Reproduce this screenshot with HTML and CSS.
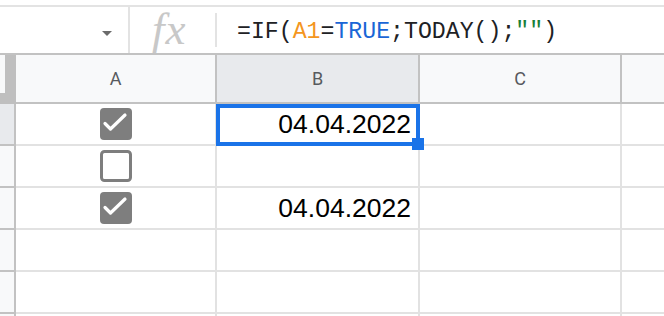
FILE: index.html
```html
<!DOCTYPE html>
<html lang="de">
<head>
  <meta charset="UTF-8">
  <meta name="viewport" content="width=device-width, initial-scale=1.0">
  <title>Tabelle - Datum bei Haken</title>
  <link rel="stylesheet" href="styles.css">
</head>
<body>
  <div class="top-strip"></div>

  <div class="formula-bar">
    <div class="name-box"><span class="caret"></span></div>
    <div class="fx">fx</div>
    <div class="fx-sep"></div>
    <div class="formula">=IF(<span class="ref">A1</span>=<span class="bool">TRUE</span>;TODAY();<span class="str">""</span>)</div>
  </div>

  <div class="grid">
    <!-- Spaltenköpfe -->
    <div class="corner"></div>
    <div class="col-head">A</div>
    <div class="col-head active">B</div>
    <div class="col-head">C</div>
    <div class="col-head last"></div>

    <!-- Zeile 1 -->
    <div class="row-head active"></div>
    <div class="cell center">
      <svg class="checkbox" width="32" height="32" viewBox="0 0 32 32">
        <rect x="0" y="0" width="32" height="32" rx="4" fill="#7e7e7e"/>
        <path d="M5 15.5 L10.5 21 L25 7" fill="none" stroke="#fff" stroke-width="3.2" stroke-linecap="round" stroke-linejoin="round"/>
      </svg>
    </div>
    <div class="cell value selected">
      04.04.2022
      <span class="sel-box"></span>
      <span class="sel-handle"></span>
    </div>
    <div class="cell"></div>
    <div class="cell last"></div>

    <!-- Zeile 2 -->
    <div class="row-head"></div>
    <div class="cell center">
      <svg class="checkbox" width="32" height="32" viewBox="0 0 32 32">
        <rect x="1.5" y="1.5" width="29" height="29" rx="3" fill="#fff" stroke="#7e7e7e" stroke-width="3"/>
      </svg>
    </div>
    <div class="cell value"></div>
    <div class="cell"></div>
    <div class="cell last"></div>

    <!-- Zeile 3 -->
    <div class="row-head"></div>
    <div class="cell center">
      <svg class="checkbox" width="32" height="32" viewBox="0 0 32 32">
        <rect x="0" y="0" width="32" height="32" rx="4" fill="#7e7e7e"/>
        <path d="M5 15.5 L10.5 21 L25 7" fill="none" stroke="#fff" stroke-width="3.2" stroke-linecap="round" stroke-linejoin="round"/>
      </svg>
    </div>
    <div class="cell value">04.04.2022</div>
    <div class="cell"></div>
    <div class="cell last"></div>

    <!-- Zeile 4 -->
    <div class="row-head"></div>
    <div class="cell"></div>
    <div class="cell"></div>
    <div class="cell"></div>
    <div class="cell last"></div>

    <!-- Zeile 5 -->
    <div class="row-head"></div>
    <div class="cell"></div>
    <div class="cell"></div>
    <div class="cell"></div>
    <div class="cell last"></div>

    <!-- Zeile 6 -->
    <div class="row-head"></div>
    <div class="cell"></div>
    <div class="cell"></div>
    <div class="cell"></div>
    <div class="cell last"></div>
  </div>
</body>
</html>
```

FILE: styles.css
```css
* {
  box-sizing: border-box;
  margin: 0;
  padding: 0;
}
html, body {
  overflow: hidden;
}
body {
  background: #fff;
  width: 664px;
  height: 316px;
  font-family: "Liberation Sans", Arial, sans-serif;
}
.top-strip {
  height: 7px;
  border-bottom: 2px solid #e3e3e3;
}

/* Formelleiste */
.formula-bar {
  display: flex;
  align-items: center;
  height: 48px;
  border-bottom: 2px solid #c2c2c2;
}
.name-box {
  width: 130px;
  height: 100%;
  display: flex;
  align-items: center;
  justify-content: flex-end;
  padding-right: 16px;
  border-right: 2px solid #e3e3e3;
}
.caret {
  width: 0;
  height: 0;
  margin-top: 6px;
  border-left: 5px solid transparent;
  border-right: 5px solid transparent;
  border-top: 5px solid #6b6b6b;
}
.fx {
  width: 85px;
  padding-left: 22px;
  padding-bottom: 2px;
  font-family: "Liberation Serif", "Times New Roman", serif;
  font-style: italic;
  font-size: 45px;
  letter-spacing: 1px;
  line-height: 46px;
  color: #c8c8c8;
}
.fx-sep {
  width: 2px;
  height: 34px;
  background: #e3e3e3;
}
.formula {
  padding-left: 20px;
  padding-top: 3px;
  font-family: "Liberation Mono", "Courier New", monospace;
  font-size: 23.2px;
  color: #202124;
  white-space: pre;
}
.ref { color: #f4961e; }
.bool { color: #1a66d6; }
.str { color: #188038; }

/* Tabelle */
.grid {
  display: grid;
  grid-template-columns: 16px 201px 203px 202px 1fr;
  grid-template-rows: 49px;
  grid-auto-rows: 42px;
}
.corner {
  position: relative;
  background: #bfbfbf;
}
.corner::before {
  content: "";
  position: absolute;
  left: 0;
  top: 0;
  width: 5px;
  height: 38px;
  background: #f8f9fa;
}
.col-head {
  display: flex;
  align-items: center;
  justify-content: center;
  background: #f8f9fa;
  border-right: 2px solid #c2c2c2;
  border-bottom: 2px solid #c2c2c2;
  font-family: Roboto, "Liberation Sans", sans-serif;
  font-size: 18px;
  color: #575a5e;
}
.col-head.active {
  background: #e8eaed;
}
.row-head {
  background: #f8f9fa;
  border-right: 2px solid #c2c2c2;
  border-bottom: 2px solid #c2c2c2;
}
.row-head.active {
  background: #e8eaed;
}
.cell {
  position: relative;
  border-right: 2px solid #e2e2e2;
  border-bottom: 2px solid #e2e2e2;
}
.last {
  border-right: none;
}
.center {
  display: flex;
  align-items: center;
  justify-content: center;
}
.value {
  text-align: right;
  padding-right: 7px;
  font-size: 26.5px;
  line-height: 40px;
  color: #000;
}

/* Auswahl */
.sel-box {
  position: absolute;
  z-index: 2;
  top: 0;
  left: -1px;
  right: -2px;
  bottom: -2px;
  border: 4px solid #1a73e8;
}
.sel-handle {
  position: absolute;
  z-index: 3;
  right: -6px;
  bottom: -6px;
  width: 12px;
  height: 12px;
  background: #1a73e8;
}
```
